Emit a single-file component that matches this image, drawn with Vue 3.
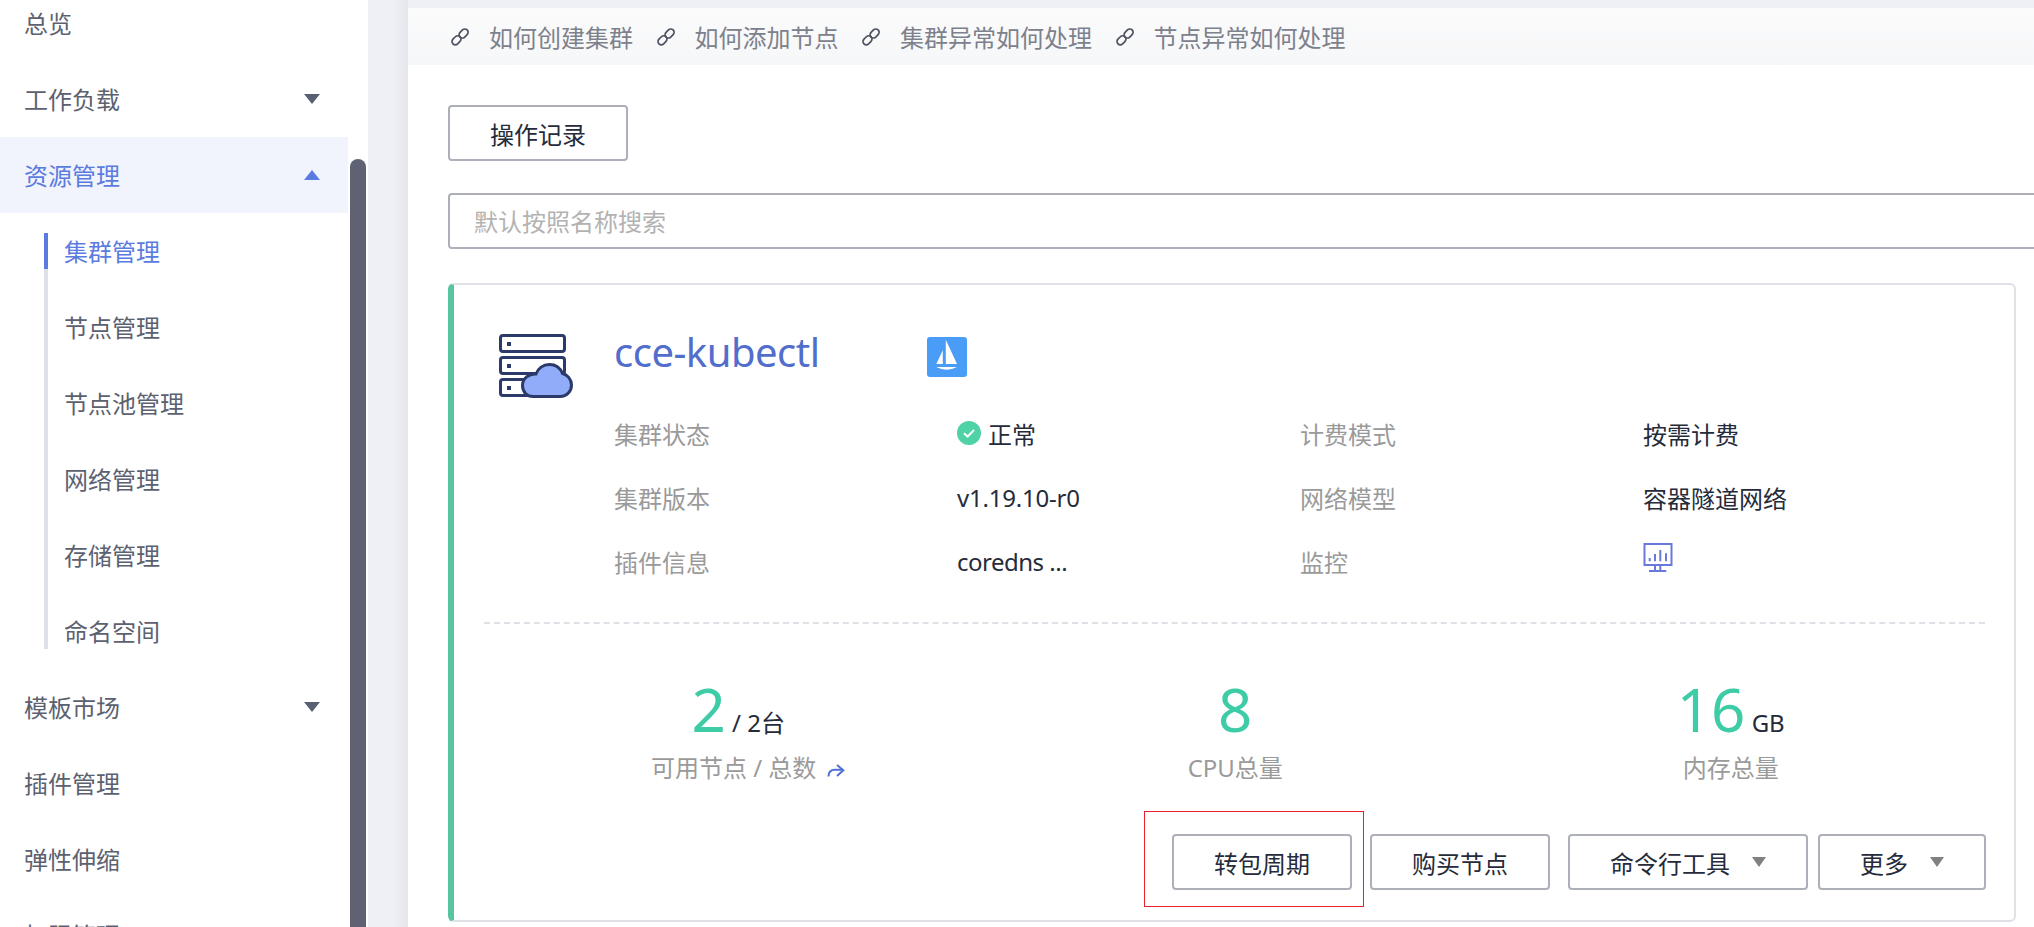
<template>
  <div class="page">
    <aside class="sidebar">
      <nav class="nav">
        <template v-for="item in navItems" :key="item.name">
          <div class="nav-item" :class="{ active: item.open }">
            <span>{{ item.name }}</span>
            <i v-if="item.caret" class="caret" :class="{ up: item.open }"></i>
          </div>
          <div v-if="item.open" class="sub-nav">
            <div
              v-for="(sub, i) in subItems"
              :key="sub"
              class="sub-item"
              :class="{ current: i === 0 }"
            >{{ sub }}</div>
          </div>
        </template>
      </nav>
      <div class="scrollbar"></div>
    </aside>

    <main class="main">
      <div class="tips">
        <a v-for="tip in tips" :key="tip" class="tip">
          <svg class="link-icon" width="18" height="18" viewBox="0 0 18 18" fill="none" stroke="#4d5261" stroke-width="1.7">
            <rect x="0.5" y="9" width="10" height="6.6" rx="3.3" transform="rotate(-45 5.5 12.3)" />
            <rect x="7.6" y="2.2" width="10" height="6.6" rx="3.3" transform="rotate(-45 12.6 5.5)" />
          </svg>
          <span>{{ tip }}</span>
        </a>
      </div>

      <div class="panel">
        <button class="btn">操作记录</button>
        <div class="search">默认按照名称搜索</div>

        <section class="card">
          <div class="card-top">
            <svg class="cluster-icon" width="80" height="70" viewBox="0 0 80 70" fill="none" stroke="#2b3a6b" stroke-width="3">
              <rect x="4.5" y="4.5" width="64" height="16" rx="2.5" />
              <rect x="4.5" y="26.5" width="64" height="16" rx="2.5" />
              <rect x="4.5" y="48.5" width="64" height="16" rx="2.5" />
              <path d="M11 11h4v4h-4zM11 33h4v4h-4zM11 55h4v4h-4z" fill="#2b3a6b" stroke="none" />
              <path d="M37 65.5H64C71 65.5 75.5 60 75.5 54C75.5 48 71 43.5 66.5 42.5C64 36.5 59 33.5 53.5 33.5C47 33.5 42 37.5 40 43C33 42.5 26.5 47.5 26.5 54.5C26.5 61 31 65.5 37 65.5Z" fill="#91acf9" />
            </svg>
            <div class="info">
              <div class="head">
                <span class="title">cce-kubectl</span>
                <svg class="sail" width="40" height="40" viewBox="0 0 40 40">
                  <rect width="40" height="40" rx="3" fill="#4a9df6" />
                  <path d="M18.8 2.7L30 27H18.8ZM15.8 13.3V27H9.3ZM9.3 30H30Q19.6 35.5 9.3 30Z" fill="#fff" />
                </svg>
              </div>
              <div class="info-grid">
                <span class="label">集群状态</span>
                <span class="value status">
                  <svg width="24" height="24" viewBox="0 0 24 24">
                    <circle cx="12" cy="12" r="12" fill="#4fd2a6" />
                    <path d="M7 12.2l3.6 3.4 6.4-6.6" fill="none" stroke="#fff" stroke-width="2" />
                  </svg>
                  正常
                </span>
                <span class="label">计费模式</span>
                <span class="value">按需计费</span>
                <span class="label">集群版本</span>
                <span class="value latin">v1.19.10-r0</span>
                <span class="label">网络模型</span>
                <span class="value">容器隧道网络</span>
                <span class="label">插件信息</span>
                <span class="value latin tight">coredns ...</span>
                <span class="label">监控</span>
                <span class="value">
                  <svg class="monitor" width="30" height="30" viewBox="0 0 30 30" fill="none" stroke="#6878dc">
                    <rect x="1.5" y="1" width="27" height="21" stroke-width="2" />
                    <path d="M6.7 18.3V15M12 18.3V11M17.3 18.3V7M23 18.3V10.3" stroke-width="2" />
                    <path d="M12 22v5M17.3 22v5M6 28h17.3" stroke-width="2" />
                  </svg>
                </span>
              </div>
            </div>
          </div>

          <div class="divider"></div>

          <div class="stats">
            <div class="stat">
              <div class="stat-num shifted"><b>2</b><span> / 2台</span></div>
              <div class="stat-label first">
                可用节点 / 总数
                <svg width="18" height="13" viewBox="0 0 18 13" fill="none" stroke="#4f6fd8" stroke-width="2">
                  <path d="M1.5 12.5C1.5 7.5 4.5 5.8 8 5.8H16" />
                  <path d="M10 1L16.3 6.2L10 12" />
                </svg>
              </div>
            </div>
            <div class="stat">
              <div class="stat-num"><b>8</b></div>
              <div class="stat-label">CPU总量</div>
            </div>
            <div class="stat">
              <div class="stat-num"><b>16</b><span> GB</span></div>
              <div class="stat-label">内存总量</div>
            </div>
          </div>

          <div class="actions">
            <div class="marked">
              <button class="btn">转包周期</button>
              <span class="annotation"></span>
            </div>
            <button class="btn">购买节点</button>
            <button class="btn btn-menu wide">命令行工具<i class="btn-caret"></i></button>
            <button class="btn btn-menu more">更多<i class="btn-caret"></i></button>
          </div>
        </section>
      </div>
    </main>
  </div>
</template>

<script setup>
const navItems = [
  { name: '总览' },
  { name: '工作负载', caret: true },
  { name: '资源管理', caret: true, open: true },
  { name: '模板市场', caret: true },
  { name: '插件管理' },
  { name: '弹性伸缩' },
  { name: '权限管理' }
]

const subItems = ['集群管理', '节点管理', '节点池管理', '网络管理', '存储管理', '命名空间']

const tips = ['如何创建集群', '如何添加节点', '集群异常如何处理', '节点异常如何处理']
</script>

<style>
html,
body {
  margin: 0;
  overflow: hidden;
}
</style>

<style scoped>
.page {
  display: flex;
  width: 2034px;
  height: 927px;
  overflow: hidden;
  font-family: "Noto Sans", "Noto Sans CJK SC", sans-serif;
  font-size: 24px;
  color: #252b3a;
  background: #fff;
}

.sidebar {
  display: flex;
  flex: none;
  width: 368px;
  height: 927px;
  overflow: hidden;
  background: #fff;
}

.nav {
  flex: none;
  width: 348px;
  margin-top: -15px;
}

.nav-item {
  display: flex;
  align-items: center;
  justify-content: space-between;
  box-sizing: border-box;
  height: 76px;
  padding: 0 28px 2px 24px;
  color: #5c6170;
}

.nav-item.active {
  color: #5b7be0;
  background: #f1f4fd;
}

.caret {
  width: 0;
  height: 0;
  margin-top: 2px;
  border-left: 8px solid transparent;
  border-right: 8px solid transparent;
  border-top: 10px solid #5a6073;
}

.caret.up {
  border-top: 0;
  border-bottom: 10px solid #5b7be0;
}

.sub-nav {
  margin: 20px 0 20px 44px;
  border-left: 4px solid #dfe1e8;
}

.sub-item {
  display: flex;
  align-items: center;
  box-sizing: border-box;
  height: 36px;
  padding: 0 0 2px 16px;
  margin-left: -4px;
  margin-bottom: 40px;
  border-left: 4px solid transparent;
  color: #5c6170;
}

.sub-item:last-child {
  margin-bottom: 0;
}

.sub-item.current {
  color: #5b7be0;
  border-left-color: #5b7be0;
}

.scrollbar {
  flex: none;
  width: 16px;
  height: 800px;
  margin: 159px 0 0 2px;
  border-radius: 8px 8px 0 0;
  background: #5e6273;
}

.main {
  flex: 1;
  min-width: 0;
  padding: 8px 0 0 40px;
  background: linear-gradient(90deg, #eef0f5 0%, #eef0f5 60%, #e5e6eb 100%) left top / 40px 100% no-repeat, #eef0f5;
}

.tips {
  display: flex;
  align-items: center;
  gap: 23.5px;
  height: 57px;
  padding-left: 43px;
  color: #7d818c;
  background: linear-gradient(180deg, #fbfbfc, #f6f7f8);
}

.tip {
  display: flex;
  align-items: center;
  gap: 20px;
}

.link-icon {
  flex: none;
}

.panel {
  height: 862px;
  padding: 40px 18px 0 40px;
  background: #fff;
}

.btn {
  flex: none;
  width: 180px;
  height: 56px;
  padding: 0;
  border: 2px solid #adb0b8;
  border-radius: 4px;
  background: #fff;
  color: #252b3a;
  font: inherit;
}

.search {
  display: flex;
  align-items: center;
  width: calc(100% + 60px);
  box-sizing: border-box;
  height: 56px;
  margin-top: 32px;
  padding: 0 0 2px 24px;
  border: 2px solid #adb0b8;
  border-radius: 4px;
  color: #b2b2b2;
}

.card {
  box-sizing: border-box;
  height: 639px;
  margin-top: 34px;
  padding: 46px 0 0;
  border: 2px solid #dfe1e6;
  border-left: 6px solid #57c59d;
  border-radius: 6px;
}

.card-top {
  display: flex;
  padding-left: 42px;
}

.cluster-icon {
  flex: none;
  margin-right: 38px;
}

.info {
  flex: 1;
}

.head {
  display: flex;
  align-items: flex-start;
  height: 70px;
}

.title {
  width: 313px;
  height: 42px;
  line-height: 42px;
  font-size: 40px;
  letter-spacing: -0.5px;
  color: #526ecc;
}

.sail {
  margin-top: 6px;
}

.info-grid {
  display: grid;
  grid-template-columns: repeat(4, 343px);
  grid-auto-rows: 64px;
  align-items: center;
}

.label {
  color: #9a9a9a;
}

.latin {
  letter-spacing: -0.2px;
}

.latin.tight {
  letter-spacing: -0.5px;
}

.status {
  display: flex;
  align-items: center;
  gap: 7px;
}

.monitor {
  display: block;
  margin-top: -6px;
}

.divider {
  margin: 29px 29px 0 30px;
  border-top: 2px dashed #dfe1e6;
}

.stats {
  display: grid;
  grid-template-columns: repeat(3, 495.5px);
  margin: 50px 0 0 38px;
  text-align: center;
}

.stat-num {
  height: 70px;
  line-height: 70px;
  margin-bottom: 6px;
}

.stat-num.shifted {
  margin-right: 3px;
}

.stat-num b {
  font-size: 60px;
  font-weight: 400;
  color: #3dcca6;
}

.stat-label {
  height: 36px;
  line-height: 36px;
  color: #9a9a9a;
}

.stat-label.first {
  margin-left: 16px;
}

.stat-label svg {
  margin-left: 4px;
}

.actions {
  display: flex;
  justify-content: flex-end;
  gap: 18px;
  margin-top: 48px;
  padding-right: 28px;
}

.marked {
  position: relative;
}

.annotation {
  position: absolute;
  top: -23px;
  left: -28px;
  width: 220px;
  height: 96px;
  box-sizing: border-box;
  border: 1px solid #e8202e;
  pointer-events: none;
}

.btn-menu {
  display: flex;
  align-items: center;
  justify-content: center;
  gap: 22px;
}

.wide {
  width: 240px;
}

.more {
  width: 168px;
  margin-left: -8px;
}

.btn-caret {
  width: 0;
  height: 0;
  border-left: 7px solid transparent;
  border-right: 7px solid transparent;
  border-top: 10px solid #808080;
}
</style>
